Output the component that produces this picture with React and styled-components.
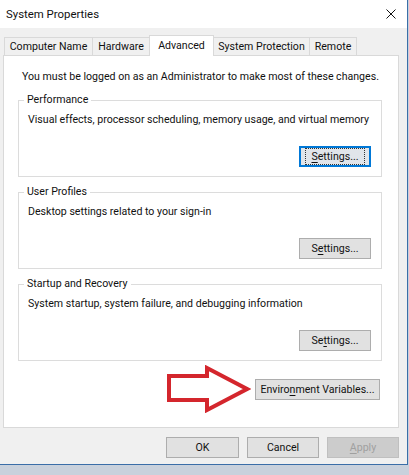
import React from "react"
import styled, { createGlobalStyle, css } from "styled-components"

const GlobalStyle = createGlobalStyle`
    html, body {
        margin: 0;
        padding: 0;
        background: #c9d1dc;
    }
    body {
        font-family: Roboto, "Open Sans", sans-serif;
        font-size: 10.6px;
        color: #111;
    }
`

const Window = styled.div`
    width: 408px;
    height: 465px;
    box-sizing: border-box;
    background: #f0f0f0;
    border-right: 1px solid #3b6ea8;
    border-bottom: 1px solid #3b6ea8;
    display: flex;
    flex-direction: column;
    white-space: nowrap;
    & > * { flex-shrink: 0; }
`
const TitleBar = styled.div`
    height: 28px;
    background: #fff;
    display: flex;
    align-items: center;
    justify-content: space-between;
    padding: 0 11px 0 6px;
    font-size: 11.4px;
`
const CloseIcon = styled.svg`
    width: 10px;
    height: 10px;
    margin-top: -1px;
`
const TabRow = styled.div`
    display: flex;
    align-items: flex-end;
    margin-top: 7px;
    padding-left: 4px;
    height: 20px;
`
const Tab = styled.div`
    width: ${(p) => p.w}px;
    height: 18px;
    box-sizing: border-box;
    border: 1px solid #d9d9d9;
    border-bottom: none;
    margin-right: -1px;
    display: flex;
    align-items: center;
    justify-content: center;
    background: #f0f0f0;
    ${(p) => p.active && css`
        height: 21px;
        margin-bottom: -1px;
        background: #fff;
        position: relative;
        z-index: 1;
        padding-bottom: 2px;
    `}
`
const Panel = styled.div`
    margin: 0 8px 0 3px;
    background: #fff;
    border: 1px solid #d9d9d9;
    padding: 14px 16px 14px 14px;
    display: flex;
    flex-direction: column;
`
const Notice = styled.div`
    line-height: 14px;
    margin-left: 4px;
    margin-bottom: 9px;
`
const Group = styled.fieldset`
    margin: 0 0 8px 0;
    padding: 6px 10px 9px 9px;
    border: 1px solid #dcdcdc;
    min-width: 0;
    display: flex;
    flex-direction: column;
`
const Legend = styled.legend`
    padding: 0 3px;
    margin-left: -4px;
    line-height: 14px;
`
const Desc = styled.div`
    line-height: 14px;
`
const Button = styled.button`
    font: inherit;
    color: #111;
    width: ${(p) => p.w || 72}px;
    height: 21px;
    padding: 0;
    background: #e1e1e1;
    border: 1px solid #adadad;
    display: flex;
    align-items: center;
    justify-content: center;
    white-space: nowrap;
    ${(p) => p.focused && css`
        border-color: #0078d7;
        box-shadow: inset 0 0 0 1px #0078d7;
        background: #e1e5ea;
        span { outline: 1px dotted #333; outline-offset: 1px; padding: 0 4px; }
    `}
    ${(p) => p.disabled && css`
        background: #cccccc;
        border-color: #bfbfbf;
        color: #a0a0a0;
    `}
`
const GroupButton = styled(Button)`
    align-self: flex-end;
    margin-top: 19px;
`
const EnvRow = styled.div`
    display: flex;
    justify-content: flex-end;
    align-items: center;
    gap: 4px;
    margin-top: -4px;
    margin-right: 2px;
`
const Footer = styled.div`
    display: flex;
    justify-content: flex-end;
    gap: 8px;
    margin-top: 9px;
    padding-right: 8px;
`
const U = styled.u`
    text-decoration-thickness: 1px;
    text-underline-offset: 2px;
`

const Arrow = () => (
    <svg width="84" height="48" viewBox="0 0 84 48">
        <polygon
            points="2,11 40,11 40,3 80,24 40,45 40,35 2,35"
            fill="#fff"
            stroke="#d4262d"
            strokeWidth="4"
            strokeLinejoin="miter"
        />
    </svg>
)

const tabs = [
    { label: "Computer Name", w: 89 },
    { label: "Hardware", w: 58 },
    { label: "Advanced", w: 65, active: true },
    { label: "System Protection", w: 97 },
    { label: "Remote", w: 48 },
]

const groups = [
    { title: "Performance", desc: "Visual effects, processor scheduling, memory usage, and virtual memory", key: 0, focused: true },
    { title: "User Profiles", desc: "Desktop settings related to your sign-in", key: 1 },
    { title: "Startup and Recovery", desc: "System startup, system failure, and debugging information", key: 2 },
]

// underline the access key letter of "Settings..."
const SettingsLabel = ({ at }) => {
    const txt = "Settings..."
    return (
        <span>
            {txt.slice(0, at)}<U>{txt[at]}</U>{txt.slice(at + 1)}
        </span>
    )
}

const App = () => {
    return (
        <>
            <GlobalStyle />
            <Window>
                <TitleBar>
                    <span>System Properties</span>
                    <CloseIcon viewBox="0 0 10 10">
                        <path d="M0.5 0.5 L9.5 9.5 M9.5 0.5 L0.5 9.5" stroke="#111" strokeWidth="1" />
                    </CloseIcon>
                </TitleBar>
                <TabRow>
                    {tabs.map((t) => (
                        <Tab key={t.label} w={t.w} active={t.active}>{t.label}</Tab>
                    ))}
                </TabRow>
                <Panel>
                    <Notice>You must be logged on as an Administrator to make most of these changes.</Notice>
                    {groups.map((g) => (
                        <Group key={g.title}>
                            <Legend>{g.title}</Legend>
                            <Desc>{g.desc}</Desc>
                            <GroupButton focused={g.focused}>
                                <SettingsLabel at={g.key} />
                            </GroupButton>
                        </Group>
                    ))}
                    <EnvRow>
                        <Arrow />
                        <Button w={125}>
                            <span>Enviro<U>n</U>ment Variables...</span>
                        </Button>
                    </EnvRow>
                </Panel>
                <Footer>
                    <Button w={73}>OK</Button>
                    <Button>Cancel</Button>
                    <Button disabled><span><U>A</U>pply</span></Button>
                </Footer>
            </Window>
        </>
    )
}

export default App
